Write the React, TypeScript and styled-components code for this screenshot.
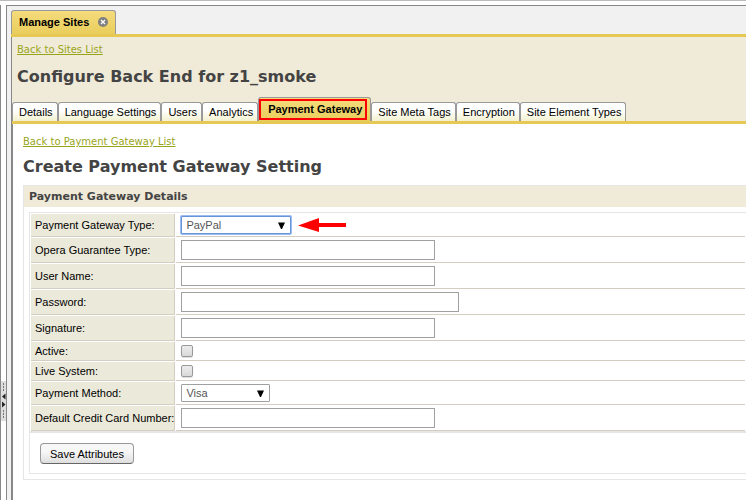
import React from "react";
import styled, { createGlobalStyle } from "styled-components";

const sans = `"Liberation Sans", Arial, Helvetica, sans-serif`;
const wide = `"DejaVu Sans", Verdana, sans-serif`;

const GlobalStyle = createGlobalStyle`
  *, *::before, *::after { box-sizing: border-box; }
  body {
    margin: 0;
    background: #fff;
    color: #000;
    font: 11px/14px ${sans};
    overflow: hidden;
  }
`;

const Page = styled.div`
  display: flex;
  min-height: 100vh;
  border-top: 1px solid #bbb;
  padding-top: 4px;
`;

const Splitter = styled.div`
  flex: none;
  width: 6px;
  border-left: 1px solid #888;
  padding-top: 376px;
`;

const Grip = styled.button`
  display: block;
  width: 5px;
  height: 40px;
  padding: 0;
  border: 0;
  background: #dedede;
  svg { display: block; }
`;

const Workspace = styled.main`
  flex: 1;
  min-width: 0;
  display: flex;
  flex-direction: column;
  border: solid #888;
  border-width: 1px 0 0 1px;
  background: #f1f1f1;
  padding: 4px 0 0 4px;
`;

const OuterTabs = styled.div`
  display: flex;
  height: 27px;
  border-bottom: 3px solid #e6c954;
`;

const OuterTab = styled.div`
  display: flex;
  align-items: center;
  gap: 9px;
  padding: 0 7px 2px;
  border: 1px solid #999;
  border-bottom: 0;
  border-radius: 3px 3px 0 0;
  background: linear-gradient(#f5dc7c, #e9cd5c);
  font-weight: bold;
`;

const CloseButton = styled.button`
  width: 10px;
  height: 10px;
  padding: 0;
  border: 0;
  background: none;
  svg { display: block; }
`;

const Body = styled.div`
  flex: 1;
  display: flex;
  flex-direction: column;
  border-left: 1px solid #888;
  background: #f0ead8;
`;

const Heading = styled.header`
  display: flex;
  flex-direction: column;
  gap: 2px;
  padding: 6px 5px 10px;
`;

const BackLink = styled.a`
  display: block;
  width: fit-content;
  font: 10px/14px ${wide};
  color: #98a51a;
`;

const Title = styled.h1`
  margin: 8px 0 0;
  font: bold 16px/20px ${wide};
  color: #444;
`;

const Tabs = styled.nav`
  display: flex;
  align-items: flex-end;
  height: 27px;
  border-bottom: 3px solid #e6c954;
`;

const Tab = styled.a<{ $active?: boolean }>`
  position: relative;
  flex: none;
  height: ${(p) => (p.$active ? 24 : 19)}px;
  padding: ${(p) => (p.$active ? "4px 8px 0 9px" : "2px 4px 0 6px")};
  border: 1px solid #999;
  border-bottom: 0;
  border-radius: 3px 3px 0 0;
  background: ${(p) => (p.$active ? "linear-gradient(#f5dc7c, #e9cd5c)" : "linear-gradient(#fff 40%, #f3f1cf)")};
  font-weight: ${(p) => (p.$active ? "bold" : "normal")};
  color: #000;
  text-decoration: none;
  white-space: nowrap;
`;

const Highlight = styled.span`
  position: absolute;
  inset: 1px 3px 1px 0;
  border: 2px solid #f00;
`;

const Content = styled.section`
  flex: 1;
  border-left: 1px solid #888;
  background: #fff;
  padding: 11px 0 20px 10px;
`;

const Panel = styled.section`
  margin-top: 8px;
  border: solid #e6e6e6;
  border-width: 1px 0 1px 1px;
  padding: 0 0 5px;
`;

const PanelTitle = styled.h2`
  margin: 0 0 5px;
  padding: 0 5px;
  background: #f0ead8;
  font: bold 11px/21px ${wide};
  color: #444;
`;

const FormBox = styled.form`
  margin-left: 5px;
  border: solid #e6e6e6;
  border-width: 1px 0 1px 1px;
`;

const Fields = styled.table`
  width: 100%;
  border-collapse: separate;
  border-spacing: 1px;
  margin-bottom: -1px;
`;

const LabelCell = styled.th`
  width: 143px;
  padding: 2px 0 2px 4px;
  border: solid #d4cdc0;
  border-width: 0 1px 1px 0;
  background: #ebe9da;
  font-weight: normal;
  text-align: left;
  white-space: nowrap;
`;

const ValueCell = styled.td`
  padding: 2px 5px;
  border-bottom: 1px solid #d4cdc0;
`;

const Line = styled.div`
  display: flex;
  align-items: center;
  gap: 7px;
`;

const TextBox = styled.input<{ $wide?: boolean }>`
  display: block;
  width: ${(p) => (p.$wide ? 278 : 254)}px;
  height: 20px;
  padding: 0 4px;
  border: 1px solid #a0a0a0;
  background: #fff;
  font: inherit;
  outline: none;
`;

const CheckBox = styled.input`
  appearance: none;
  display: block;
  width: 12px;
  height: 12px;
  margin: 0;
  border: 1px solid #999;
  border-radius: 2px;
  background: linear-gradient(#ececec, #d9d9d9);
  box-shadow: 0 1px 1px #ddd;
`;

const SelectWrap = styled.div<{ $wide?: boolean }>`
  position: relative;
  width: ${(p) => (p.$wide ? 110 : 89)}px;
  svg { position: absolute; right: 6px; top: 6px; pointer-events: none; }
`;

const Select = styled.select<{ $focused?: boolean }>`
  appearance: none;
  display: block;
  width: 100%;
  height: 18px;
  padding: 0 4px;
  border: 1px solid ${(p) => (p.$focused ? "#6593dc" : "#a0a0a0")};
  border-radius: 1px;
  box-shadow: ${(p) => (p.$focused ? "0 0 0 1px #9dbdf0" : "none")};
  background: #fff;
  font: inherit;
  color: #555;
  outline: none;
`;

const Footer = styled.div`
  border-top: 2px solid #e6e6e6;
  padding: 10px 10px 9px;
`;

const SaveButton = styled.button`
  display: block;
  height: 21px;
  padding: 0 9px;
  border: 1px solid #999;
  border-bottom-color: #666;
  border-radius: 4px;
  background: linear-gradient(#f7f7f7 40%, #dedede);
  font: inherit;
  color: #000;
`;

const DownArrow = () => (
  <svg width="7" height="7" viewBox="0 0 7 7" aria-hidden="true">
    <path d="M0 0.5h7L4 7H3z" fill="#000" />
  </svg>
);

const RedArrow = () => (
  <svg width="48" height="14" viewBox="0 0 48 14" aria-hidden="true">
    <path d="M0 7.5L21 0v5h27v4H21v5z" fill="#f00" />
  </svg>
);

const GripMarks = () => (
  <svg width="5" height="40" viewBox="0 0 5 40" aria-hidden="true">
    <path d="M2.5 2v9M2.5 29v9" stroke="#777" strokeDasharray="2 1" />
    <path d="M4.500 12.500v6L1 15.500zM1 20.500v6l3.500-3z" fill="#222" />
  </svg>
);

const tabs = [
  "Details",
  "Language Settings",
  "Users",
  "Analytics",
  "Payment Gateway",
  "Site Meta Tags",
  "Encryption",
  "Site Element Types",
];

type Field = {
  id: string;
  label: string;
  kind: "text" | "password" | "check" | "select";
  value?: string;
  focused?: boolean;
};

const fields: Field[] = [
  { id: "type", label: "Payment Gateway Type:", kind: "select", value: "PayPal", focused: true },
  { id: "guarantee", label: "Opera Guarantee Type:", kind: "text" },
  { id: "user", label: "User Name:", kind: "text" },
  { id: "password", label: "Password:", kind: "password" },
  { id: "signature", label: "Signature:", kind: "text" },
  { id: "active", label: "Active:", kind: "check" },
  { id: "live", label: "Live System:", kind: "check" },
  { id: "method", label: "Payment Method:", kind: "select", value: "Visa" },
  { id: "card", label: "Default Credit Card Number:", kind: "text" },
];

function Control({ field }: { field: Field }) {
  if (field.kind === "check") return <CheckBox type="checkbox" id={field.id} />;
  if (field.kind === "select")
    return (
      <Line>
        <SelectWrap $wide={field.focused}>
          <Select id={field.id} $focused={field.focused} defaultValue={field.value}>
            <option>{field.value}</option>
          </Select>
          <DownArrow />
        </SelectWrap>
        {field.focused && <RedArrow />}
      </Line>
    );
  return <TextBox id={field.id} type={field.kind} $wide={field.kind === "password"} />;
}

export default function App() {
  return (
    <Page>
      <GlobalStyle />
      <Splitter>
        <Grip aria-label="Resize panel">
          <GripMarks />
        </Grip>
      </Splitter>
      <Workspace>
        <OuterTabs>
          <OuterTab>
            Manage Sites
            <CloseButton aria-label="Close">
              <svg width="10" height="10" viewBox="0 0 10 10">
                <circle cx="5" cy="5" r="5" fill="#808080" />
                <path d="M3 3l4 4M7 3L3 7" stroke="#fff" strokeWidth="1.3" />
              </svg>
            </CloseButton>
          </OuterTab>
        </OuterTabs>
        <Body>
          <Heading>
            <BackLink href="#sites">Back to Sites List</BackLink>
            <Title>Configure Back End for z1_smoke</Title>
          </Heading>
          <Tabs>
            {tabs.map((name) => {
              const active = name === "Payment Gateway";
              return (
                <Tab key={name} href="#tab" $active={active}>
                  {name}
                  {active && <Highlight />}
                </Tab>
              );
            })}
          </Tabs>
          <Content>
            <BackLink href="#gateways">Back to Payment Gateway List</BackLink>
            <Title as="h2">Create Payment Gateway Setting</Title>
            <Panel>
              <PanelTitle as="h3">Payment Gateway Details</PanelTitle>
              <FormBox onSubmit={(e) => e.preventDefault()}>
                <Fields>
                  <tbody>
                    {fields.map((field) => (
                      <tr key={field.id}>
                        <LabelCell scope="row">
                          <label htmlFor={field.id}>{field.label}</label>
                        </LabelCell>
                        <ValueCell>
                          <Control field={field} />
                        </ValueCell>
                      </tr>
                    ))}
                  </tbody>
                </Fields>
                <Footer>
                  <SaveButton type="submit">Save Attributes</SaveButton>
                </Footer>
              </FormBox>
            </Panel>
          </Content>
        </Body>
      </Workspace>
    </Page>
  );
}
